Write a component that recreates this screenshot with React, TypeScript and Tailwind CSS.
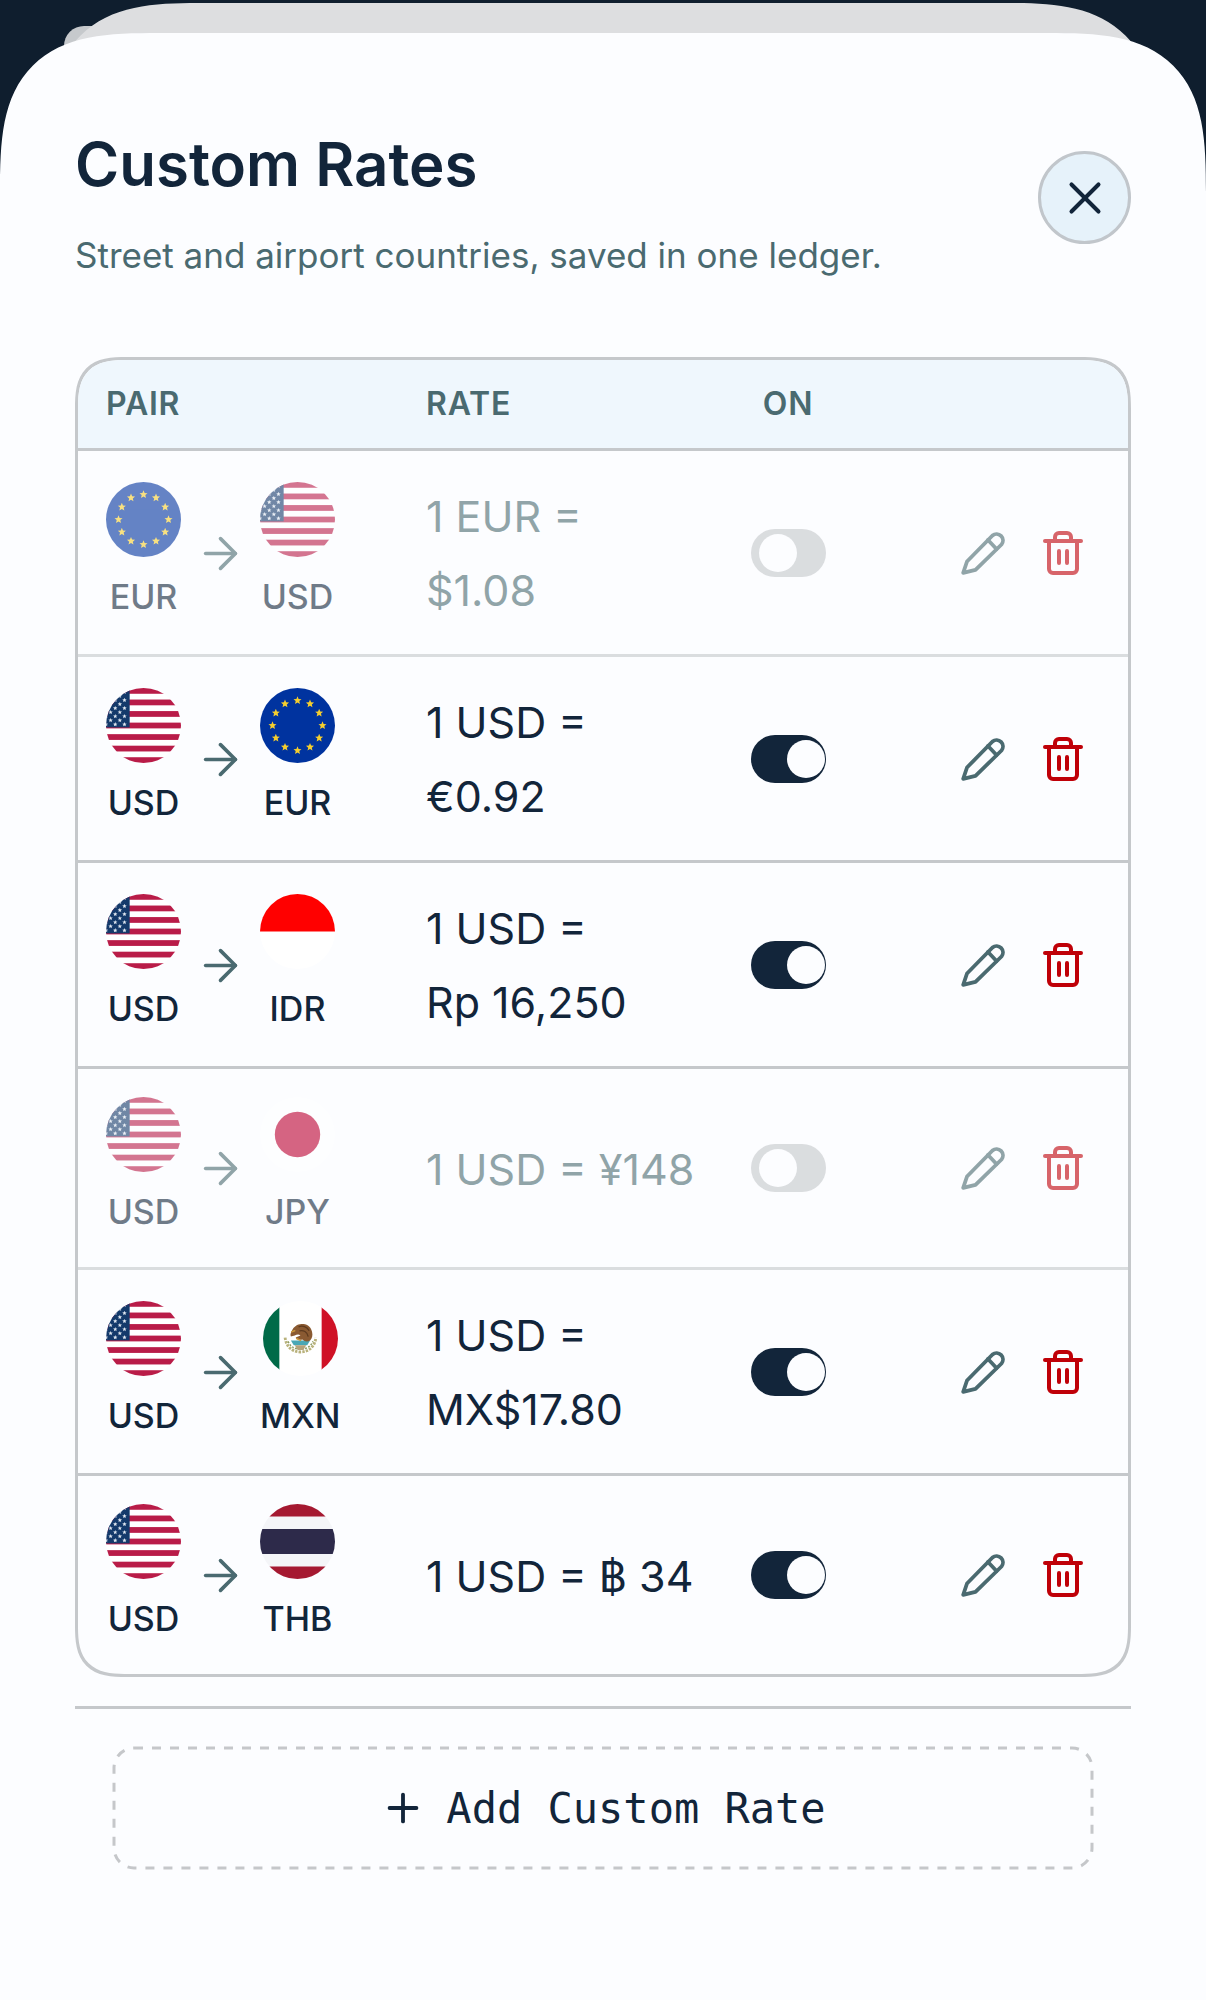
import { useState } from "react";
import { ArrowRight, Plus, X } from "lucide-react";

type Code = "EUR" | "USD" | "IDR" | "JPY" | "MXN" | "THB";

interface Rate {
  from: Code;
  to: Code;
  lines: string[];
  on: boolean;
}

const initialRates: Rate[] = [
  { from: "EUR", to: "USD", lines: ["1 EUR =", "$1.08"], on: false },
  { from: "USD", to: "EUR", lines: ["1 USD =", "€0.92"], on: true },
  { from: "USD", to: "IDR", lines: ["1 USD =", "Rp 16,250"], on: true },
  { from: "USD", to: "JPY", lines: ["1 USD = ¥148"], on: false },
  { from: "USD", to: "MXN", lines: ["1 USD =", "MX$17.80"], on: true },
  { from: "USD", to: "THB", lines: ["1 USD = ฿ 34"], on: true },
];

function starPoints(cx: number, cy: number, r: number) {
  return Array.from({ length: 10 }, (_, i) => {
    const radius = i % 2 === 0 ? r : r * 0.45;
    const angle = (Math.PI / 5) * i - Math.PI / 2;
    return `${(cx + radius * Math.cos(angle)).toFixed(2)},${(cy + radius * Math.sin(angle)).toFixed(2)}`;
  }).join(" ");
}

function UsFlag() {
  return (
    <>
      <rect width="78" height="78" fill="#ffffff" />
      {Array.from({ length: 7 }, (_, i) => (
        <rect key={i} y={i * 12} width="78" height="6" fill="#b91c48" />
      ))}
      <rect width="24.6" height="41" fill="#143a6b" />
      {Array.from({ length: 9 }, (_, row) =>
        (row % 2 === 0 ? [0, 9.6, 19.2] : [4.8, 14.4]).map((x) => (
          <polygon key={`${row}-${x}`} points={starPoints(x, 4.2 + row * 4.2, 2.4)} fill="#dfe6ef" />
        )),
      )}
    </>
  );
}

function EuFlag() {
  return (
    <>
      <rect width="78" height="78" fill="#00339f" />
      {Array.from({ length: 12 }, (_, i) => {
        const a = (Math.PI / 6) * i;
        return (
          <polygon
            key={i}
            points={starPoints(39 + 26 * Math.sin(a), 39 - 26 * Math.cos(a), 4.4)}
            fill="#f5ce2e"
          />
        );
      })}
    </>
  );
}

function MxFlag() {
  return (
    <>
      <rect width="78" height="78" fill="#ffffff" />
      <rect width="17" height="78" fill="#006a48" />
      <rect x="61" width="17" height="78" fill="#cf1126" />
      <path d="M23 38c1 9 7 15 16 15s15-6 16-15" fill="none" stroke="#b9b27c" strokeWidth="3" strokeDasharray="2.5 1.2" />
      <path d="M26 42c3 6 7 8 13 8s10-2 13-8" fill="none" stroke="#8a9a5e" strokeWidth="1.5" strokeDasharray="2 1.5" />
      <path d="M29 41h20l-3 5H32z" fill="#49a7b5" />
      <path d="M33 46h12l-3 5h-6z" fill="#b5a27a" />
      <path
        d="M30 31c2-5 7-8 12-7 5 0 8 4 9 8 1 4 0 7-2 9-3 2-6 1-8-1-3 1-6 0-7-2l5-2c-2-2-4-1-6 0l-4 1c-1-2 0-4 1-6z"
        fill="#8a5a32"
      />
      <path d="M37 27c4-2 9 0 11 4M38 31c4-1 8 1 9 6" fill="none" stroke="#5d3a1e" strokeWidth="1.4" />
      <path d="M30 32l3-1M35 39l4 2" stroke="#c9963a" strokeWidth="1.6" strokeLinecap="round" />
    </>
  );
}

function FlagArt({ code }: { code: Code }) {
  switch (code) {
    case "USD":
      return <UsFlag />;
    case "EUR":
      return <EuFlag />;
    case "MXN":
      return <MxFlag />;
    case "IDR":
      return (
        <>
          <rect width="78" height="78" fill="#ffffff" />
          <rect width="78" height="39" fill="#ff0000" />
        </>
      );
    case "JPY":
      return (
        <>
          <rect width="78" height="78" fill="#ffffff" />
          <circle cx="39" cy="39" r="23.6" fill="#bc0030" />
        </>
      );
    case "THB":
      return (
        <>
          <rect width="78" height="78" fill="#f4f5f8" />
          <rect width="78" height="13" fill="#a51931" />
          <rect y="26" width="78" height="26" fill="#2d2a4a" />
          <rect y="65" width="78" height="13" fill="#a51931" />
        </>
      );
  }
}

function Currency({ code }: { code: Code }) {
  return (
    <div className="flex flex-col items-center gap-3">
      <svg viewBox="0 0 78 78" aria-hidden="true" className="size-[75px] rounded-full">
        <FlagArt code={code} />
      </svg>
      <span className="text-[34px] leading-[56px] font-medium">{code}</span>
    </div>
  );
}

function PencilIcon() {
  return (
    <svg
      viewBox="0 0 44 44"
      aria-hidden="true"
      className="size-11 fill-none stroke-current"
      strokeWidth="3.8"
      strokeLinecap="round"
      strokeLinejoin="round"
    >
      <path d="M6 30.5 31.5 4.5a6.4 6.4 0 0 1 9 9L14.5 38.8 2.2 41.8Z" />
      <path d="m27 9 8.5 9" />
    </svg>
  );
}

function TrashIcon() {
  return (
    <svg
      viewBox="0 0 40 44"
      aria-hidden="true"
      className="h-11 w-10 fill-none stroke-current"
      strokeWidth="4"
      strokeLinecap="round"
      strokeLinejoin="round"
    >
      <path d="M2 10h36" />
      <path d="M6 10v28a4 4 0 0 0 4 4h20a4 4 0 0 0 4-4V10" />
      <path d="M12 10V6a4 4 0 0 1 4-4h8a4 4 0 0 1 4 4v4" />
      <path d="M16 20v12M24 20v12" />
    </svg>
  );
}

function RateRow({ rate, last, onToggle }: { rate: Rate; last: boolean; onToggle: () => void }) {
  const name = `${rate.from} to ${rate.to}`;
  const cell = last ? "" : "border-b-3 border-[#c5c8cb]";
  return (
    <tr className={rate.on ? "" : "opacity-60"}>
      <td className={`${cell} pt-7 pb-[27px] pl-7`}>
        <div className="flex items-center gap-[14px]">
          <Currency code={rate.from} />
          <ArrowRight size={51} strokeWidth={1.7} className="shrink-0 text-[#4a6a70]" aria-hidden="true" />
          <Currency code={rate.to} />
        </div>
      </td>
      <td
        className={`${cell} pt-7 pb-[27px] pl-7 text-[43px] leading-[74px] whitespace-nowrap ${rate.on ? "" : "text-[#4a6a70]"}`}
      >
        {rate.lines.map((line) => (
          <span key={line} className="block">
            {line}
          </span>
        ))}
      </td>
      <td className={`${cell} text-center`}>
        <input
          type="checkbox"
          role="switch"
          aria-label={`Use ${name} rate`}
          checked={rate.on}
          onChange={onToggle}
          className="inline-flex h-12 w-[75px] cursor-pointer appearance-none items-center rounded-full bg-[#c5c8cb] align-middle before:ml-2 before:size-[38px] before:rounded-full before:bg-[#fcfdff] checked:bg-[#12253a] checked:before:ml-9"
        />
      </td>
      <td className={`${cell} pr-[25px]`}>
        <div className="flex justify-end">
          <button
            type="button"
            aria-label={`Edit ${name}`}
            className="flex size-20 items-center justify-center text-[#4a6a70]"
          >
            <PencilIcon />
          </button>
          <button
            type="button"
            aria-label={`Delete ${name}`}
            className="flex size-20 items-center justify-center text-[#bf0008]"
          >
            <TrashIcon />
          </button>
        </div>
      </td>
    </tr>
  );
}

export default function App() {
  const [rates, setRates] = useState(initialRates);
  const toggle = (index: number) =>
    setRates((list) => list.map((r, i) => (i === index ? { ...r, on: !r.on } : r)));

  return (
    <div className="relative flex min-h-screen flex-col bg-[#0f1e2e] pt-[33px] font-['Inter',sans-serif] text-[#12253a]">
      <div className="absolute top-[26px] left-16 h-20 w-40 rounded-tl-[20px] bg-[#c6c9cc]" />
      <div className="absolute inset-x-12 top-[3px] h-48 rounded-t-[112px] bg-[#dddee0] supports-[corner-shape:squircle]:rounded-t-[150px] supports-[corner-shape:squircle]:[corner-shape:superellipse(1.5)]" />

      <main className="relative flex-1 rounded-t-[116px] bg-[#fcfdff] px-[75px] pt-24 pb-10 supports-[corner-shape:squircle]:rounded-t-[160px] supports-[corner-shape:squircle]:[corner-shape:superellipse(1.6)]">
        <header className="flex items-start justify-between gap-6">
          <div>
            <h1 className="text-[60px] leading-[70px] font-semibold">Custom Rates</h1>
            <p className="mt-[30px] text-[35px] leading-[52px] text-[#4a6a70]">
              Street and airport countries, saved in one ledger.
            </p>
          </div>
          <button
            type="button"
            aria-label="Close"
            className="mt-[22px] flex size-[93px] shrink-0 items-center justify-center rounded-full border-3 border-[#c1c6cb] bg-[#e6f2fa]"
          >
            <X size={54} strokeWidth={1.8} aria-hidden="true" />
          </button>
        </header>

        <div className="mt-19 overflow-hidden rounded-[40px] border-3 border-[#c5c8cb] supports-[corner-shape:squircle]:rounded-[52px] supports-[corner-shape:squircle]:[corner-shape:superellipse(1.5)]">
          <table className="w-full border-separate border-spacing-0 text-left">
            <thead className="bg-[#eff7fd] text-[32px] leading-[88px] text-[#4a6a70]">
              <tr>
                <th className="w-80 border-b-3 border-[#c5c8cb] pl-7 font-semibold tracking-wide">PAIR</th>
                <th className="w-80 border-b-3 border-[#c5c8cb] pl-7 font-semibold tracking-wide">RATE</th>
                <th className="w-35 border-b-3 border-[#c5c8cb] text-center font-semibold tracking-wide">ON</th>
                <th className="border-b-3 border-[#c5c8cb]" aria-label="Actions" />
              </tr>
            </thead>
            <tbody>
              {rates.map((rate, i) => (
                <RateRow
                  key={`${rate.from}-${rate.to}`}
                  rate={rate}
                  last={i === rates.length - 1}
                  onToggle={() => toggle(i)}
                />
              ))}
            </tbody>
          </table>
        </div>

        <footer className="mt-[29px] border-t-3 border-[#c5c8cb] px-[37px] pt-[37px]">
          <button
            type="button"
            className="relative flex h-[124px] w-full items-center justify-center gap-5 font-['DejaVu_Sans_Mono',monospace] text-[42px]"
          >
            <svg aria-hidden="true" className="absolute inset-0 size-full overflow-visible">
              <rect
                x="2"
                y="2"
                rx="20"
                className="h-[calc(100%-4px)] w-[calc(100%-4px)] fill-none stroke-[#c5c7ca]"
                strokeWidth="3"
                strokeDasharray="9 9"
              />
            </svg>
            <Plus size={46} strokeWidth={2} aria-hidden="true" />
            Add Custom Rate
          </button>
        </footer>
      </main>
    </div>
  );
}
